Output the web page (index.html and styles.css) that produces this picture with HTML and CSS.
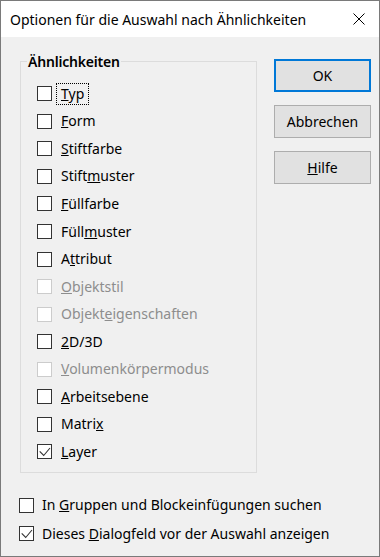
FILE: index.html
```html
<!DOCTYPE html>
<html lang="de">
  <head>
    <meta charset="UTF-8" />
    <title>Optionen für die Auswahl nach Ähnlichkeiten</title>
    <link rel="stylesheet" href="styles.css">
  </head>
  <body>
    <div class="window">
      <div class="titlebar">
        <span class="title">Optionen für die Auswahl nach Ähnlichkeiten</span>
        <svg class="close" width="12" height="12" viewBox="0 0 12 12">
          <path d="M0.5 0.5 L11.5 11.5 M11.5 0.5 L0.5 11.5" stroke="#000" stroke-width="1" fill="none" />
        </svg>
      </div>

      <div class="content">
        <div class="main">
          <fieldset class="group">
            <legend>Ähnlichkeiten</legend>
            <div class="row"><span class="box"></span><span class="label focus"><u>T</u>yp</span></div>
            <div class="row"><span class="box"></span><span class="label"><u>F</u>orm</span></div>
            <div class="row"><span class="box"></span><span class="label"><u>S</u>tiftfarbe</span></div>
            <div class="row"><span class="box"></span><span class="label">Stift<u>m</u>uster</span></div>
            <div class="row"><span class="box"></span><span class="label"><u>F</u>üllfarbe</span></div>
            <div class="row"><span class="box"></span><span class="label">Füll<u>m</u>uster</span></div>
            <div class="row"><span class="box"></span><span class="label">A<u>t</u>tribut</span></div>
            <div class="row disabled"><span class="box"></span><span class="label"><u>O</u>bjektstil</span></div>
            <div class="row disabled"><span class="box"></span><span class="label">Objekt<u>e</u>igenschaften</span></div>
            <div class="row"><span class="box"></span><span class="label"><u>2</u>D/3D</span></div>
            <div class="row disabled"><span class="box"></span><span class="label"><u>V</u>olumenkörpermodus</span></div>
            <div class="row"><span class="box"></span><span class="label"><u>A</u>rbeitsebene</span></div>
            <div class="row"><span class="box"></span><span class="label">Matri<u>x</u></span></div>
            <div class="row">
              <span class="box">
                <svg width="13" height="13" viewBox="0 0 13 13">
                  <path d="M1.7 6.3 L5.7 10.5 L12 3" stroke="#333" stroke-width="1.1" fill="none" />
                </svg>
              </span>
              <span class="label"><u>L</u>ayer</span>
            </div>
          </fieldset>

          <div class="buttons">
            <button class="btn default">OK</button>
            <button class="btn">Abbrechen</button>
            <button class="btn"><u>H</u>ilfe</button>
          </div>
        </div>

        <div class="options">
          <div class="row"><span class="box"></span><span class="label">In <u>G</u>ruppen und Blockeinfügungen suchen</span></div>
          <div class="row">
            <span class="box">
              <svg width="13" height="13" viewBox="0 0 13 13">
                <path d="M1.7 6.3 L5.7 10.5 L12 3" stroke="#333" stroke-width="1.1" fill="none" />
              </svg>
            </span>
            <span class="label">Dieses <u>D</u>ialogfeld vor der Auswahl anzeigen</span>
          </div>
        </div>
      </div>
    </div>
  </body>
</html>
```

FILE: styles.css
```css
body {
  margin: 0;
  font-family: "Noto Sans", "Open Sans", sans-serif;
  font-size: 14px;
  color: #000;
}
.window {
  width: 380px;
  height: 557px;
  box-sizing: border-box;
  border: 1px solid #7a7a7a;
  background-color: #f0f0f0;
  display: flex;
  flex-direction: column;
}
.titlebar {
  height: 36px;
  background-color: #fff;
  display: flex;
  align-items: center;
  justify-content: space-between;
  padding: 0 14px 0 9px;
}
.title {
  font-size: 14px;
  color: #000;
}
.close {
  display: block;
}
.content {
  flex: 1;
  padding: 0 0 0 18px;
}
.main {
  display: flex;
  align-items: flex-start;
}
.group {
  margin: 15px 0 0 1px;
  width: 237px;
  height: 421px;
  box-sizing: border-box;
  border: 1px solid #dcdcdc;
  padding: 9px 0 0 16px;
}
.group legend {
  font-weight: 600;
  font-size: 14px;
  letter-spacing: -0.2px;
  padding: 0 1px;
  margin-left: -10px;
}
.row {
  display: flex;
  align-items: center;
  height: 27.55px;
}
.box {
  width: 15px;
  height: 15px;
  box-sizing: border-box;
  border: 1px solid #333;
  background-color: #fff;
  flex-shrink: 0;
  display: flex;
  align-items: center;
  justify-content: center;
}
.box svg {
  display: block;
}
.label {
  margin-left: 9px;
  line-height: 18px;
}
.focus {
  outline: 1px dotted #000;
  outline-offset: 1px;
  margin-left: 6px;
  padding: 0 3px;
}
.disabled .box {
  border-color: #cccccc;
}
.disabled .label {
  color: #8d8d8d;
}
.buttons {
  display: flex;
  flex-direction: column;
  gap: 13px;
  margin: 22px 0 0 17px;
}
.btn {
  width: 97px;
  height: 33px;
  box-sizing: border-box;
  border: 1px solid #adadad;
  background-color: #e1e1e1;
  font-family: inherit;
  font-size: 14px;
  color: #000;
  padding: 0;
}
.btn.default {
  border: 2px solid #0078d7;
}
.options {
  margin-top: 18px;
}
.options .row {
  height: 28.5px;
}
.options .label {
  margin-left: 8px;
}
```
